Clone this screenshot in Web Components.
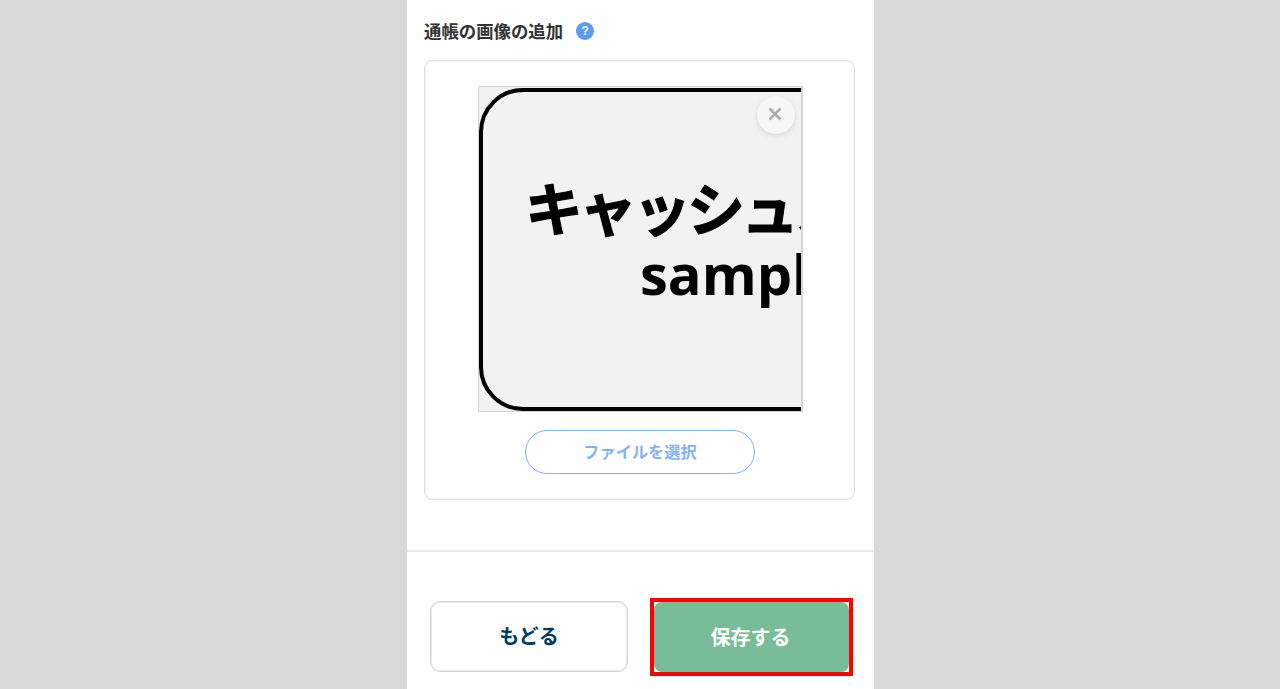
<!DOCTYPE html>
<html lang="ja">
<head>
<meta charset="utf-8">
<title>通帳の画像の追加</title>
<style>
  html, body { margin: 0; height: 100%; overflow: hidden; background: #d9d9d9; }
  body { font-family: "Noto Sans CJK JP", "Liberation Sans", sans-serif; }
</style>
</head>
<body>
<bank-panel>
  <section-title>通帳の画像の追加</section-title>
  <upload-card>
    <passbook-preview></passbook-preview>
    <pill-button>ファイルを選択</pill-button>
  </upload-card>
  <action-bar>
    <action-button>もどる</action-button>
    <action-button primary>保存する</action-button>
  </action-bar>
</bank-panel>

<script>
class BankPanel extends HTMLElement {
    constructor() {
        super();
        this.attachShadow({ mode: 'open' });
        this.shadowRoot.innerHTML = `
            <style>
                :host { display: flex; flex-direction: column; box-sizing: border-box; width: 467px; height: 689px; margin-left: 407px; padding-top: 19px; background: #fff; overflow: hidden; }
            </style>
            <slot></slot>
        `;
    }
}

class SectionTitle extends HTMLElement {
    constructor() {
        super();
        this.attachShadow({ mode: 'open' });
        this.shadowRoot.innerHTML = `
            <style>
                :host { display: flex; align-items: center; gap: 13px; height: 24px; padding-left: 17px; color: #333; font-size: 17.4px; font-weight: 700; line-height: 24px; }
                .help { display: flex; align-items: center; justify-content: center; width: 18px; height: 18px; border-radius: 50%; background: #5b9bf0; color: #fff; font: 700 12px "Liberation Sans", sans-serif; }
            </style>
            <slot></slot>
            <span class="help">?</span>
        `;
    }
}

class UploadCard extends HTMLElement {
    constructor() {
        super();
        this.attachShadow({ mode: 'open' });
        this.shadowRoot.innerHTML = `
            <style>
                :host { display: flex; flex-direction: column; align-items: center; gap: 18px; box-sizing: border-box; width: 431px; height: 440px; margin: 17px 0 50px 17px; padding: 25px 0 0 1px; border: 1px solid #e0e0e0; border-radius: 8px; box-shadow: inset 0 0 0 1px #f3f3f3; }
            </style>
            <slot></slot>
        `;
    }
}

class PassbookPreview extends HTMLElement {
    constructor() {
        super();
        this.attachShadow({ mode: 'open' });
        this.shadowRoot.innerHTML = `
            <style>
                :host { display: block; position: relative; box-sizing: border-box; width: 325px; height: 326px; border: 1px solid #d4d4d4; border-right-width: 2px; background: #f2f2f2; }
                svg { display: block; width: 322px; height: 324px; }
                text { font-family: "Noto Sans CJK JP", "Liberation Sans", sans-serif; font-weight: 700; fill: #000; }
                .kana { letter-spacing: -4px; stroke: #000; stroke-width: 1px; }
                .latin { font-family: "Open Sans", "Liberation Sans", sans-serif; }
                .close { position: absolute; top: 9px; right: 6px; width: 38px; height: 38px; box-sizing: border-box; padding: 0 2px 2px 0; border-radius: 50%; background: #f7f7f7; box-shadow: 0 2px 5px rgba(0,0,0,.12); display: flex; align-items: center; justify-content: center; }
                .close svg { width: 14px; height: 14px; }
            </style>
            <svg viewBox="0 0 322 324">
                <rect x="2" y="3" width="420" height="319" rx="42" fill="#f2f2f2" stroke="#000" stroke-width="4"/>
                <text class="kana" x="46" y="144" font-size="58">キャッシュス</text>
                <text class="latin" x="161" y="208" font-size="56">sample</text>
            </svg>
            <span class="close">
                <svg viewBox="0 0 14 14"><path d="M1.5 1.5 12.5 12.5M12.5 1.5 1.5 12.5" stroke="#adadad" stroke-width="2.6" fill="none"/></svg>
            </span>
        `;
    }
}

class PillButton extends HTMLElement {
    constructor() {
        super();
        this.attachShadow({ mode: 'open' });
        this.shadowRoot.innerHTML = `
            <style>
                :host { display: flex; align-items: center; justify-content: center; box-sizing: border-box; width: 230px; height: 44px; padding-bottom: 2px; border: 1px solid #7fb0f2; border-radius: 22px; background: #fff; color: #85b2f2; font-size: 16.2px; font-weight: 700; }
            </style>
            <slot></slot>
        `;
    }
}

class ActionBar extends HTMLElement {
    constructor() {
        super();
        this.attachShadow({ mode: 'open' });
        this.shadowRoot.innerHTML = `
            <style>
                :host { display: flex; align-items: center; gap: 22px; height: 137px; box-sizing: border-box; padding: 47px 0 13px 23px; border-top: 2px solid #e9e9e9; }
            </style>
            <slot></slot>
        `;
    }
}

class ActionButton extends HTMLElement {
    constructor() {
        super();
        this.attachShadow({ mode: 'open' });
        this.shadowRoot.innerHTML = `
            <style>
                :host { display: block; box-sizing: border-box; font-size: 20px; font-weight: 700; }
                .face { display: flex; align-items: center; justify-content: center; box-sizing: border-box; width: 198px; height: 71px; padding-bottom: 2px; border: 1px solid #d2d2d2; border-radius: 10px; box-shadow: 0 0 0 1px #ececec inset; background: #fff; color: #003c5f; }
                :host([primary]) { border: 4px solid #f00; }
                :host([primary]) .face { width: 195px; height: 70px; padding: 0 2px 0 0; border: 0; border-radius: 8px; box-shadow: none; background: #78bd98; color: #fff; }
            </style>
            <div class="face"><slot></slot></div>
        `;
    }
}

customElements.define('bank-panel', BankPanel);
customElements.define('section-title', SectionTitle);
customElements.define('upload-card', UploadCard);
customElements.define('passbook-preview', PassbookPreview);
customElements.define('pill-button', PillButton);
customElements.define('action-bar', ActionBar);
customElements.define('action-button', ActionButton);
</script>
</body>
</html>
